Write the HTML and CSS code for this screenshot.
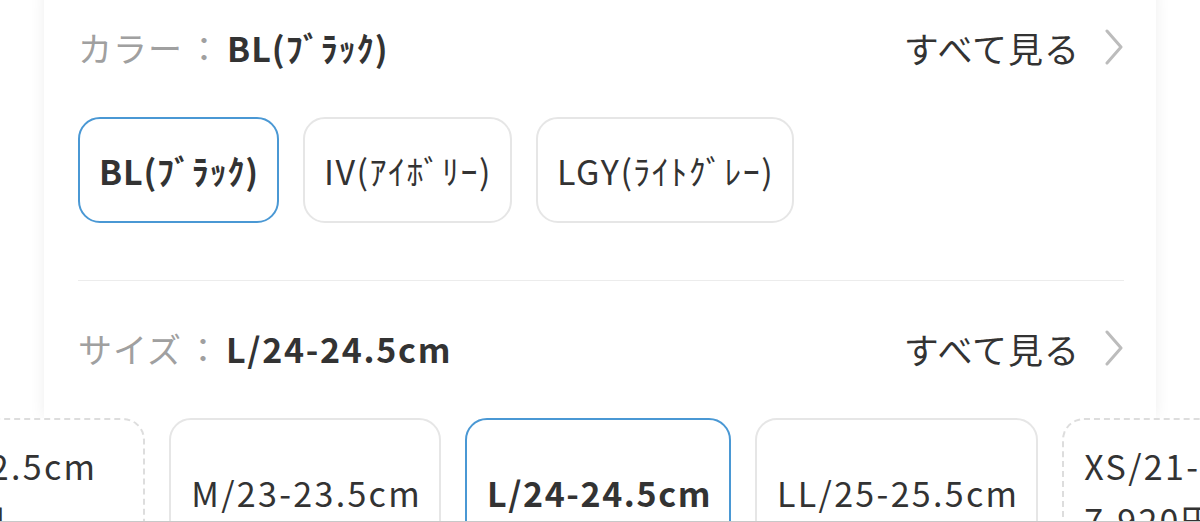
FILE: index.html
```html
<!DOCTYPE html>
<html lang="ja">
<head>
<meta charset="utf-8">
<link rel="stylesheet" href="styles.css">
</head>
<body>
<div class="viewport">
  <div class="card">
    <div class="sec-head">
      <div class="label"><span class="key">カラー</span><span class="colon">：</span><span class="val">BL(ﾌﾞﾗｯｸ)</span></div>
      <div class="more">すべて見る<svg class="chev" viewBox="0 0 20 36" width="20" height="36"><path d="M3 2 L17 18 L3 34" fill="none" stroke="#bcbcbc" stroke-width="3" stroke-linecap="round" stroke-linejoin="round"/></svg></div>
    </div>
    <div class="chips">
      <div class="chip selected">BL(ﾌﾞﾗｯｸ)</div>
      <div class="chip">IV(ｱｲﾎﾞﾘｰ)</div>
      <div class="chip">LGY(ﾗｲﾄｸﾞﾚｰ)</div>
    </div>
    <div class="divider"></div>
    <div class="sec-head second">
      <div class="label"><span class="key">サイズ</span><span class="colon">：</span><span class="val wide">L/24-24.5cm</span></div>
      <div class="more">すべて見る<svg class="chev" viewBox="0 0 20 36" width="20" height="36"><path d="M3 2 L17 18 L3 34" fill="none" stroke="#bcbcbc" stroke-width="3" stroke-linecap="round" stroke-linejoin="round"/></svg></div>
    </div>
  </div>
  <div class="size-row">
    <div class="schip soldout first"><span>S/22-22.5cm</span><span>7,920円</span></div>
    <div class="schip"><span>M/23-23.5cm</span></div>
    <div class="schip selected"><span>L/24-24.5cm</span></div>
    <div class="schip"><span>LL/25-25.5cm</span></div>
    <div class="schip soldout"><span>XS/21-21.5cm</span><span>7,920円</span></div>
  </div>
</div>
</body>
</html>
```
FILE: styles.css
```css
html, body {
  margin: 0;
  padding: 0;
  background: #fff;
}
body {
  font-family: "Noto Sans CJK JP", "Noto Sans", sans-serif;
  color: #333;
}
.viewport {
  width: 1200px;
  height: 521px;
  overflow: hidden;
  border-bottom: 1px solid #c8c8c8;
}
.card {
  margin: -24px 44px 0 44px;
  padding: 24px 32px 23px 34px;
  border-radius: 24px 24px 0 0;
  background: #fff;
  box-shadow: 0 0 16px rgba(0, 0, 0, 0.07);
}
.sec-head {
  height: 94px;
  display: flex;
  align-items: center;
  justify-content: space-between;
}
.sec-head.second {
  margin-top: 20px;
}
.label {
  font-size: 34px;
  display: flex;
  align-items: center;
}
.key {
  color: #a0a0a0;
  letter-spacing: 1px;
}
.colon {
  color: #a0a0a0;
  margin-left: 4px;
  margin-right: 6px;
}
.val {
  font-weight: 700;
  color: #333;
  letter-spacing: 1px;
}
.val.wide {
  letter-spacing: 1.7px;
}
.more {
  font-size: 35px;
  letter-spacing: 1px;
  font-weight: 400;
  color: #333;
  display: flex;
  align-items: center;
}
.chev {
  margin-left: 24px;
}
.chips {
  display: flex;
  gap: 24px;
  margin-top: 23px;
}
.chip {
  height: 102px;
  padding: 0 18px 0 19px;
  border: 2px solid #e6e6e6;
  border-radius: 22px;
  display: flex;
  align-items: center;
  font-size: 34px;
  letter-spacing: 1.5px;
  color: #333;
}
.chip.selected {
  border-color: #4a98d4;
  font-weight: 700;
  letter-spacing: 0.8px;
}
.divider {
  height: 1px;
  background: #ececec;
  margin-top: 57px;
}
.size-row {
  position: relative;
  z-index: 1;
  background: #fff;
  display: flex;
  gap: 24px;
  margin-left: -148px;
}
.schip {
  flex-shrink: 0;
  height: 146px;
  padding: 0 17px 0 20px;
  border: 2px solid #e6e6e6;
  border-radius: 22px;
  display: flex;
  flex-direction: column;
  justify-content: center;
  font-size: 34px;
  letter-spacing: 2.3px;
  color: #333;
  line-height: 54px;
}
.schip.selected {
  border-color: #4a98d4;
  font-weight: 700;
  letter-spacing: 1.6px;
}
.schip.soldout {
  border-style: dashed;
  border-color: #dddddd;
}
.schip.first {
  padding-right: 46px;
}
```
